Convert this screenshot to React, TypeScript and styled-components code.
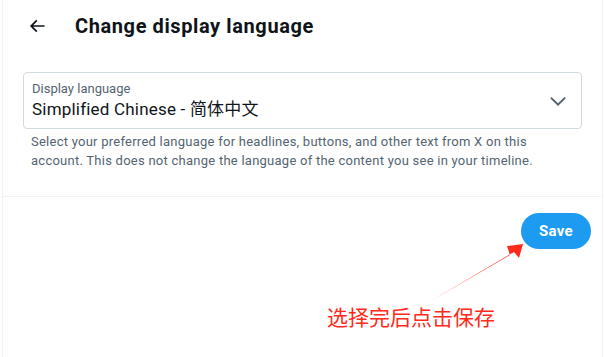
import styled, { createGlobalStyle } from "styled-components";

const GlobalStyle = createGlobalStyle`
  html, body {
    margin: 0;
    padding: 0;
    background: #ffffff;
  }
  body {
    font-family: Roboto, "Noto Sans CJK SC", sans-serif;
    color: #0f1419;
  }
`;

const Frame = styled.div`
  position: relative;
  box-sizing: border-box;
  width: 601px;
  height: 357px;
  margin-left: 2px;
  border-left: 1px solid #eff3f4;
  border-right: 1px solid #eff3f4;
`;

const Header = styled.div`
  display: flex;
  align-items: center;
  height: 52px;
  padding: 0 16px;
  gap: 20px;
`;

const BackButton = styled.button`
  display: flex;
  align-items: center;
  justify-content: center;
  width: 36px;
  height: 36px;
  padding: 0;
  border: none;
  border-radius: 50%;
  background: transparent;
  color: #0f1419;
`;

const Title = styled.h2`
  margin: 0;
  font-size: 20px;
  font-weight: 700;
  line-height: 24px;
  letter-spacing: 0.6px;
`;

const Section = styled.div`
  padding: 20px 20px 0;
  height: 124px;
  border-bottom: 1px solid #eff3f4;
`;

const SelectBox = styled.div`
  display: flex;
  align-items: center;
  justify-content: space-between;
  box-sizing: border-box;
  height: 57px;
  padding: 0 12px 0 8px;
  border: 1px solid #cfd9de;
  border-radius: 4px;
`;

const SelectText = styled.div`
  display: flex;
  flex-direction: column;
  gap: 1px;
`;

const Label = styled.span`
  font-size: 13px;
  line-height: 16px;
  color: #536471;
`;

const Value = styled.span`
  font-size: 17px;
  line-height: 22px;
  letter-spacing: 0.2px;
  color: #0f1419;
`;

const Help = styled.p`
  margin: 3px 0 0 8px;
  font-size: 13px;
  line-height: 19px;
  letter-spacing: 0.25px;
  color: #536471;
`;

const Actions = styled.div`
  display: flex;
  justify-content: flex-end;
  padding: 16px 11px 0 0;
`;

const SaveButton = styled.button`
  width: 70px;
  height: 36px;
  border: none;
  border-radius: 18px;
  background: #1d9bf0;
  color: #ffffff;
  font-family: Roboto, sans-serif;
  font-size: 15px;
  font-weight: 700;
  letter-spacing: 0.3px;
`;

const Note = styled.div`
  position: absolute;
  left: 324px;
  top: 302px;
  font-family: "Noto Sans CJK SC", sans-serif;
  font-size: 21px;
  line-height: 28px;
  color: #ff2a1a;
`;

const ArrowLayer = styled.svg`
  position: absolute;
  left: 0;
  top: 0;
  pointer-events: none;
`;

function BackArrow() {
  return (
    <svg width="20" height="20" viewBox="0 0 24 24" fill="currentColor">
      <path d="M7.414 13l5.043 5.04-1.414 1.42L3.586 12l7.457-7.46 1.414 1.42L7.414 11H21v2H7.414z" />
    </svg>
  );
}

function Chevron() {
  return (
    <svg width="22" height="22" viewBox="0 0 24 24" fill="#536471">
      <path d="M3.543 8.96l1.414-1.42L12 14.59l7.043-7.05 1.414 1.42L12 17.41 3.543 8.96z" />
    </svg>
  );
}

export default function App() {
  return (
    <>
      <GlobalStyle />
      <Frame>
        <Header>
          <BackButton>
            <BackArrow />
          </BackButton>
          <Title>Change display language</Title>
        </Header>
        <Section>
          <SelectBox>
            <SelectText>
              <Label>Display language</Label>
              <Value>Simplified Chinese - 简体中文</Value>
            </SelectText>
            <Chevron />
          </SelectBox>
          <Help>
            Select your preferred language for headlines, buttons, and other text from X on this
            account. This does not change the language of the content you see in your timeline.
          </Help>
        </Section>
        <Actions>
          <SaveButton>Save</SaveButton>
        </Actions>
        <ArrowLayer width="601" height="357" viewBox="2 0 601 357">
          <polygon points="428,302 509,255 506,246 522,244 518,258 513,252" fill="#ff2a1a" />
        </ArrowLayer>
        <Note>选择完后点击保存</Note>
      </Frame>
    </>
  );
}
